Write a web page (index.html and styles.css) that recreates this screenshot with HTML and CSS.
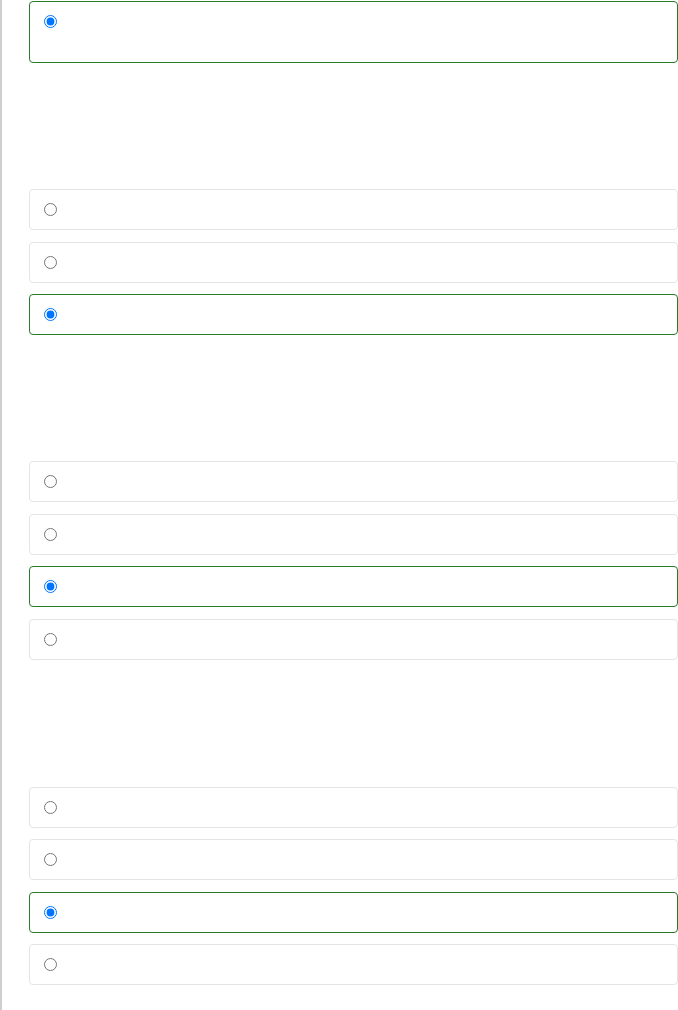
FILE: index.html
```html
<!DOCTYPE html>
<html>
<head>
<meta charset="utf-8">
<link rel="stylesheet" href="styles.css">
</head>
<body>
<div class="page">
  <section class="group group-first">
    <label class="card card-tall selected"><input type="radio" name="q1" checked></label>
  </section>
  <section class="group">
    <label class="card"><input type="radio" name="q2"></label>
    <label class="card"><input type="radio" name="q2"></label>
    <label class="card selected"><input type="radio" name="q2" checked></label>
  </section>
  <section class="group">
    <label class="card"><input type="radio" name="q3"></label>
    <label class="card"><input type="radio" name="q3"></label>
    <label class="card selected"><input type="radio" name="q3" checked></label>
    <label class="card"><input type="radio" name="q3"></label>
  </section>
  <section class="group group-last">
    <label class="card"><input type="radio" name="q4"></label>
    <label class="card"><input type="radio" name="q4"></label>
    <label class="card selected"><input type="radio" name="q4" checked></label>
    <label class="card"><input type="radio" name="q4"></label>
  </section>
</div>
</body>
</html>
```
FILE: styles.css
```css
html, body {
  margin: 0;
  padding: 0;
  background: #ffffff;
  font-family: "Liberation Sans", Arial, sans-serif;
  overflow: hidden;
}
.page {
  min-height: 1010px;
  border-left: 2px solid #cfcfcf;
  padding-left: 27px;
  box-sizing: border-box;
}
.group {
  display: flex;
  flex-direction: column;
  gap: 11.5px;
  padding-top: 126px;
}
.group-first {
  padding-top: 1px;
}
.group-last {
  padding-top: 127px;
}
.card {
  box-sizing: border-box;
  width: 649px;
  height: 41px;
  border: 1px solid #e4e4e4;
  border-radius: 4px;
  display: flex;
  align-items: center;
  padding: 0 14px;
  background: #fff;
}
.card.selected {
  border-color: #2a7a2a;
}
.card-tall {
  height: 62px;
  align-items: flex-start;
  padding-top: 13px;
}
.card input {
  margin: 0;
  width: 13px;
  height: 13px;
}
```
